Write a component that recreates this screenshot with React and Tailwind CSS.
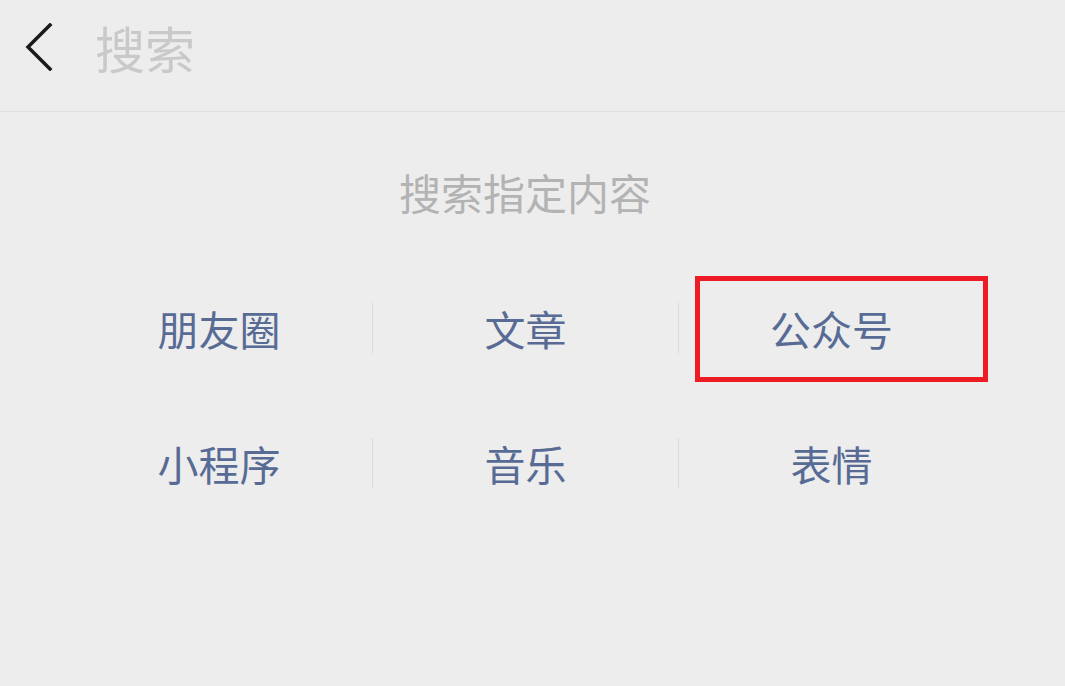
export default function App() {
  const rows = [
    ['朋友圈', '文章', '公众号'],
    ['小程序', '音乐', '表情'],
  ];
  const font = { fontFamily: '"Noto Sans CJK SC", "Noto Sans", sans-serif' };

  return (
    <div className="relative h-[686px] w-[1065px] overflow-hidden bg-[#ededed]" style={font}>
      <header className="flex h-[112px] items-center border-b border-[#e0e0e0] pb-[17px]">
        <svg className="ml-[24px] h-[48px] w-[30px]" viewBox="0 0 30 48" fill="none">
          <path d="M26 2 L4 24 L26 46" stroke="#1a1a1a" strokeWidth="3.5" strokeLinecap="square" />
        </svg>
        <h1 className="ml-[41px] text-[50px] leading-none text-[#c9c9c9]">搜索</h1>
      </header>

      <div className="ml-[66px] w-[918px]">
        <p className="mt-[57px] text-center text-[42px] leading-[46px] text-[#b3b3b3]">搜索指定内容</p>

        <div className="mt-[88px] flex flex-col gap-[85px]">
          {rows.map((row, r) => (
            <div key={r} className="grid h-[50px] grid-cols-3">
              {row.map((label, i) => (
                <div
                  key={label}
                  className={`flex items-center justify-center text-[41px] leading-none text-[#576b95] ${i > 0 ? 'border-l border-[#d9d9d9]' : ''}`}
                >
                  {label}
                </div>
              ))}
            </div>
          ))}
        </div>
      </div>

      <div className="pointer-events-none absolute left-[695px] top-[276px] h-[106px] w-[293px] border-[5px] border-[#ed1c24]" />
    </div>
  );
}
